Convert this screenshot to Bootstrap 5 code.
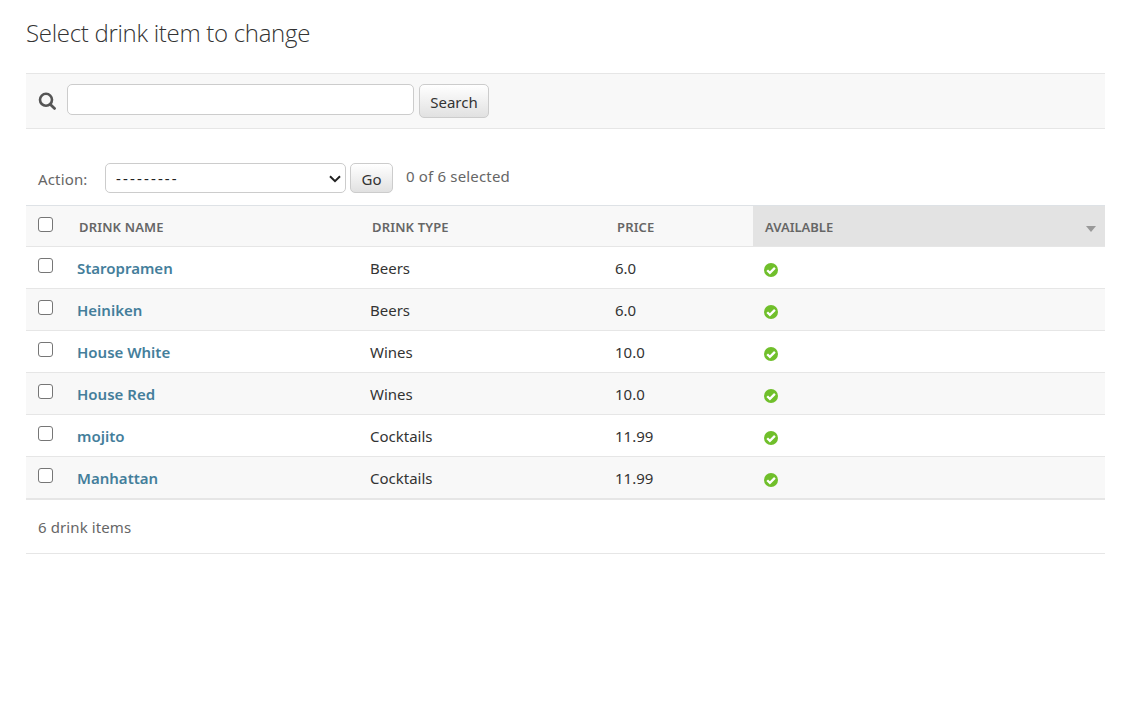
<!DOCTYPE html>
<html lang="en">
<head>
<meta charset="utf-8">
<meta name="viewport" content="width=device-width, initial-scale=1">
<title>Select drink item to change</title>
<link href="https://cdn.jsdelivr.net/npm/bootstrap@5.3.0/dist/css/bootstrap.min.css" rel="stylesheet">
<style>
body{font-family:"Noto Sans","Open Sans",sans-serif;font-size:15px;color:#333;line-height:20px}
.page{padding:17px 25px 0 26px}
h1{font-family:"Open Sans","Noto Sans",sans-serif;font-size:24px;font-weight:300;line-height:32px;margin:0 0 24px;color:#333;letter-spacing:-.3px}
.toolbar{height:56px;background:#f8f8f8;border-top:1px solid #e6e6e6;border-bottom:1px solid #e6e6e6;padding:10px 0 0 12px}
.toolbar svg{margin:8px 10px 0 0}
.toolbar .form-control{width:347px;height:31px;min-height:0;border-color:#ccc;border-radius:5px}
.btn-soft{border:1px solid #ccc;border-radius:5px;background:linear-gradient(#fff,#e1e1e1);color:#333;padding:0;font-size:15px;line-height:34px}
.search-btn{width:70px;height:34px;margin-left:5px}
.go-btn{width:43px;height:30px;line-height:30px;margin-left:4px}
.actions{height:76px;padding:34px 0 0 12px;color:#666}
.actions label{width:67px;padding-top:6px;letter-spacing:.15px}
.actions .count{padding:3px 0 0 13px;letter-spacing:.17px}
.actions .form-select{width:241px;height:30px;border-color:#ccc;border-radius:5px;padding:0 30px 0 10px;font-size:15px;line-height:27px;color:#222;letter-spacing:2.15px;
background-image:url("data:image/svg+xml,%3csvg xmlns='http://www.w3.org/2000/svg' viewBox='0 0 12 8'%3e%3cpath d='M1 1.2l5 5 5-5' fill='none' stroke='%23222' stroke-width='2'/%3e%3c/svg%3e");background-position:right 4px top 11px;background-size:12px 8px}
.results{table-layout:fixed;margin:0;border-color:#e6e6e6}
.results>:not(caption)>*>*{padding:0 12px;height:42px;vertical-align:middle;color:#333;box-shadow:none;border-bottom:1px solid #e6e6e6}
.results thead th{height:41px;background:#f8f8f8;color:#666;font-size:13px;font-weight:600;text-transform:uppercase;padding:2px 14px 0;letter-spacing:.15px}
.results thead th.sorted{background:#e3e3e3;padding:2px 9px 0 12px;letter-spacing:0}
.results a{color:#447e9b;font-weight:600;text-decoration:none}
.results .pick{padding:0 0 4px 12px!important}
.results>tbody>tr:nth-child(even)>*{background:#f8f8f8}
.pick .form-check-input{display:block;width:15px;height:15px;margin:0;border:1px solid #767676;border-radius:3px}
.caret{width:0;border:5px solid transparent;border-top:6px solid #999;border-bottom:0;margin-top:3px}
.results svg{display:block;margin:4px 0 0 -1px}
.paginator{height:55px;padding:17px 12px;border-top:1px solid #e6e6e6;border-bottom:1px solid #e6e6e6;color:#666;letter-spacing:.1px}
</style>
</head>
<body>
<svg class="d-none"><symbol id="yes" viewBox="0 0 14 14"><circle cx="7" cy="7" r="7" fill="#70bf2b"/><path d="M3.2 7.2l2.7 2.7 5-5" fill="none" stroke="#fff" stroke-width="2.3"/></symbol></svg>
<main class="page">
<h1>Select drink item to change</h1>
<form class="toolbar d-flex align-items-start">
<svg width="19" height="19" viewBox="0 0 19 19" fill="none" stroke="#555"><circle cx="8" cy="7.8" r="6" stroke-width="2.6"/><path d="M12.4 12.4l4.2 4" stroke-width="2.8" stroke-linecap="round"/></svg>
<input class="form-control" type="text" aria-label="Search">
<button class="btn btn-soft search-btn" type="button">Search</button>
</form>
<div class="actions d-flex align-items-start">
<label for="act">Action:</label>
<select id="act" class="form-select"><option>---------</option></select>
<button class="btn btn-soft go-btn" type="button">Go</button>
<span class="count">0 of 6 selected</span>
</div>
<table class="table results border-top">
<colgroup><col style="width:39px"><col style="width:293px"><col style="width:245px"><col style="width:150px"><col></colgroup>
<thead><tr><th class="pick"><input class="form-check-input" type="checkbox" aria-label="All"></th><th>Drink name</th><th>Drink type</th><th>Price</th><th class="sorted"><div class="d-flex justify-content-between align-items-center">Available<span class="caret"></span></div></th></tr></thead>
<tbody>
<tr><td class="pick"><input class="form-check-input" type="checkbox"></td><td><a href="#">Staropramen</a></td><td>Beers</td><td>6.0</td><td><svg width="14" height="14"><use href="#yes"/></svg></td></tr>
<tr><td class="pick"><input class="form-check-input" type="checkbox"></td><td><a href="#">Heiniken</a></td><td>Beers</td><td>6.0</td><td><svg width="14" height="14"><use href="#yes"/></svg></td></tr>
<tr><td class="pick"><input class="form-check-input" type="checkbox"></td><td><a href="#">House White</a></td><td>Wines</td><td>10.0</td><td><svg width="14" height="14"><use href="#yes"/></svg></td></tr>
<tr><td class="pick"><input class="form-check-input" type="checkbox"></td><td><a href="#">House Red</a></td><td>Wines</td><td>10.0</td><td><svg width="14" height="14"><use href="#yes"/></svg></td></tr>
<tr><td class="pick"><input class="form-check-input" type="checkbox"></td><td><a href="#">mojito</a></td><td>Cocktails</td><td>11.99</td><td><svg width="14" height="14"><use href="#yes"/></svg></td></tr>
<tr><td class="pick"><input class="form-check-input" type="checkbox"></td><td><a href="#">Manhattan</a></td><td>Cocktails</td><td>11.99</td><td><svg width="14" height="14"><use href="#yes"/></svg></td></tr>
</tbody></table>
<div class="paginator">6 drink items</div>
</main>
<script src="https://cdn.jsdelivr.net/npm/bootstrap@5.3.0/dist/js/bootstrap.bundle.min.js"></script>
</body>
</html>
